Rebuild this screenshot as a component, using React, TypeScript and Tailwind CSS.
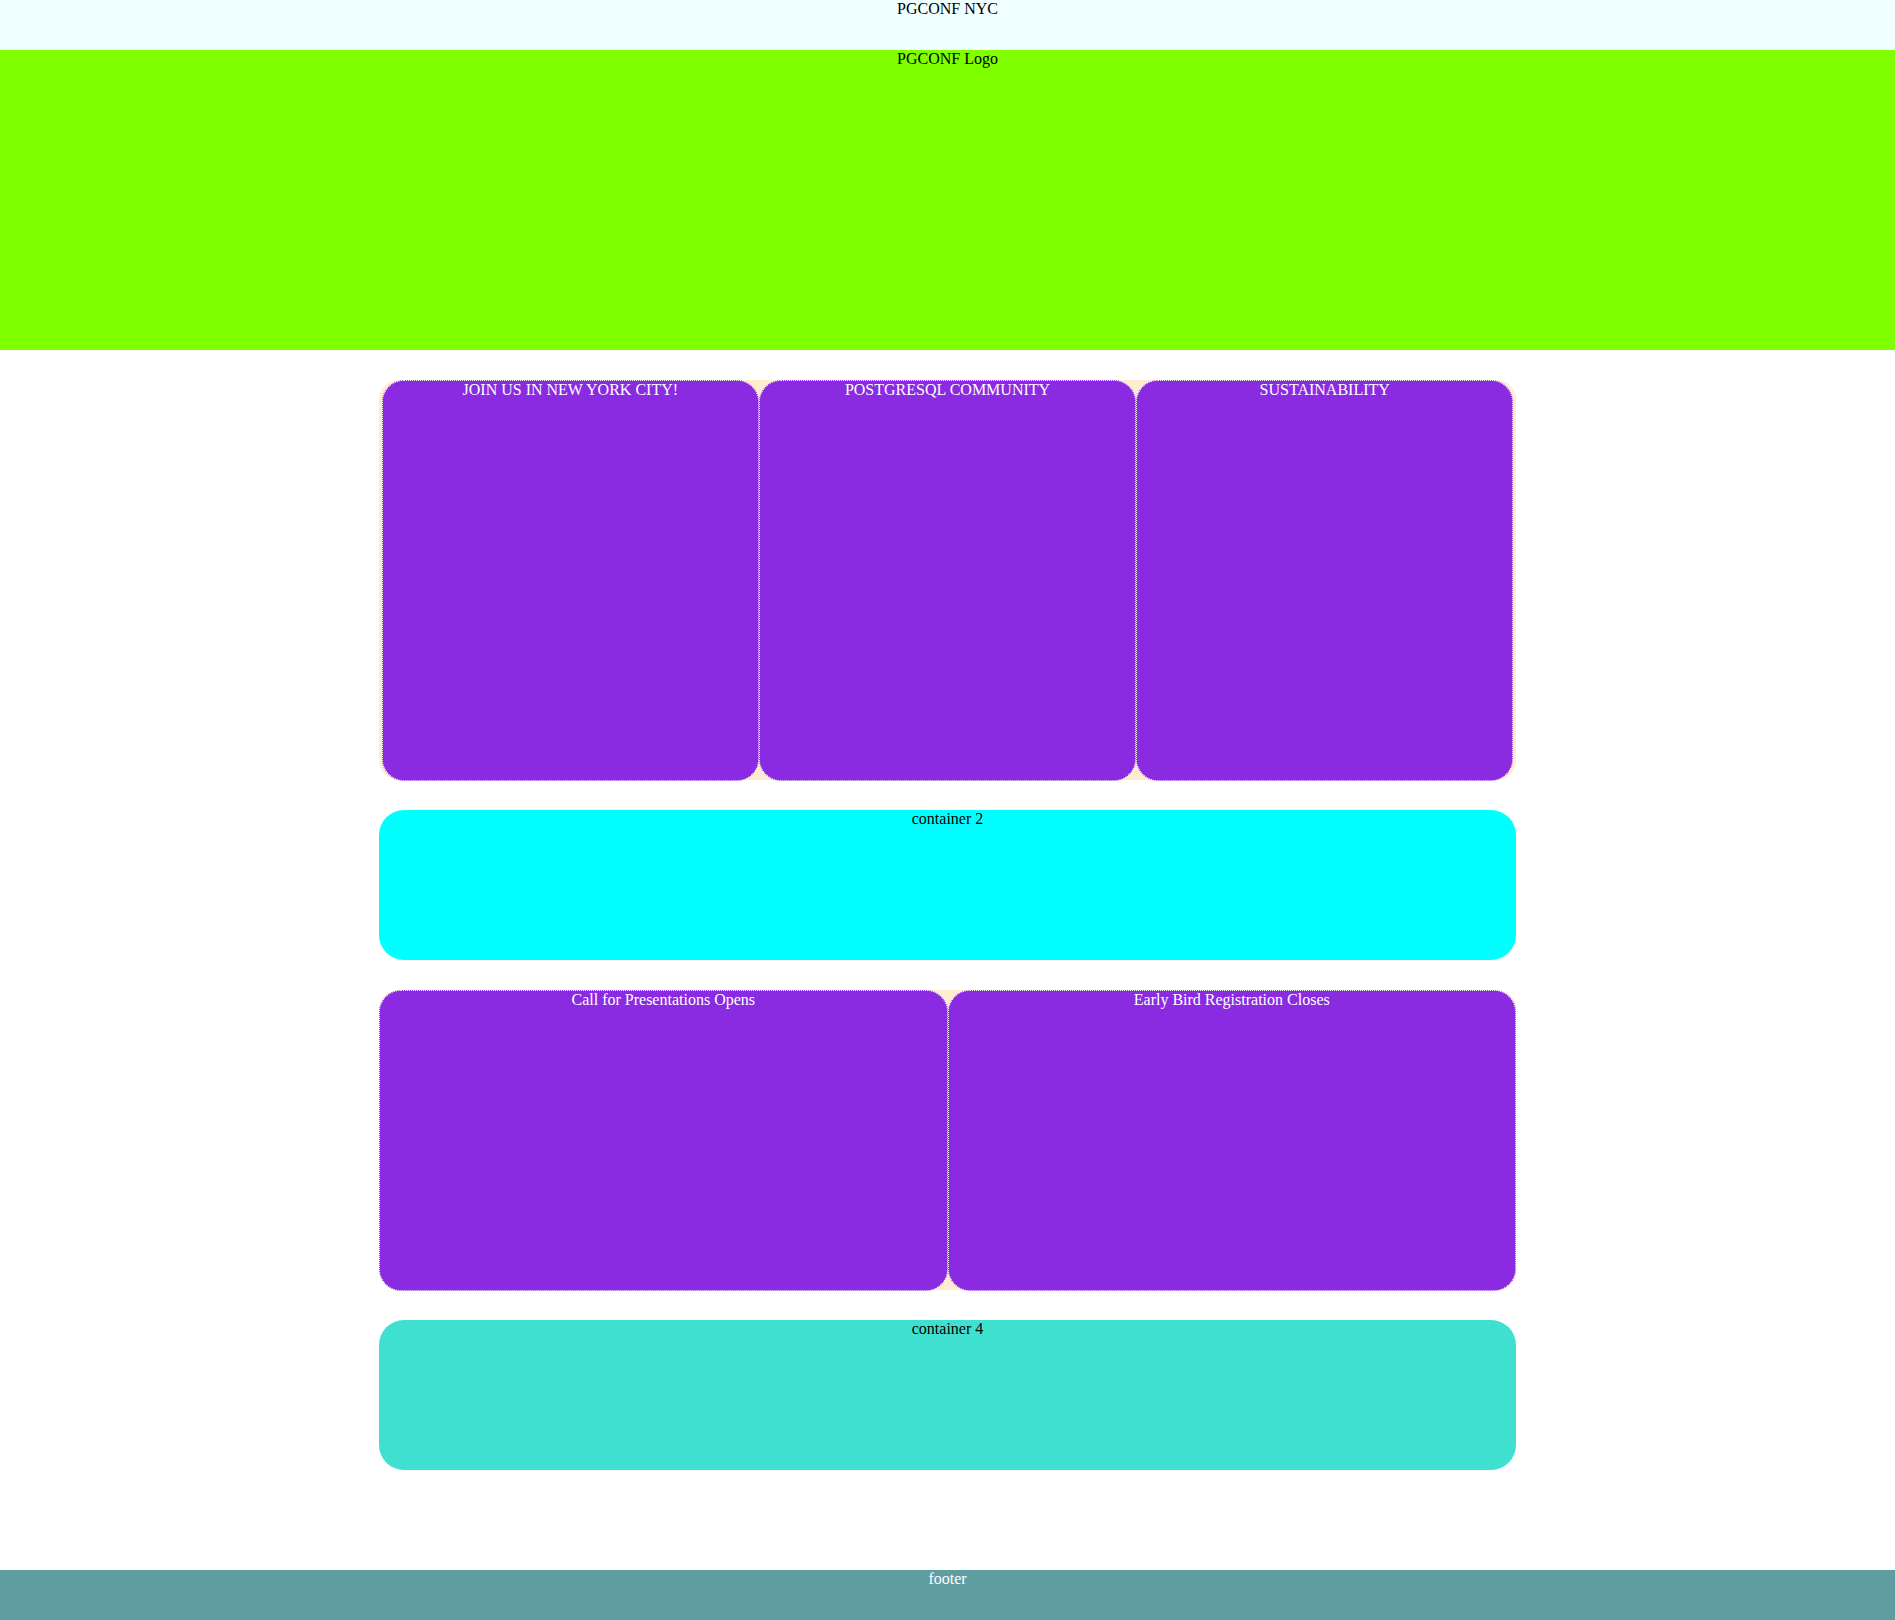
const topCards = ['JOIN US IN NEW YORK CITY!', 'POSTGRESQL COMMUNITY', 'SUSTAINABILITY'];
const dateCards = ['Call for Presentations Opens', 'Early Bird Registration Closes'];

const App = () => {
  return (
    <div className="min-h-screen bg-white font-['Liberation_Serif',serif] text-[16px] leading-[normal] text-black text-center">
      {/* Header */}
      <header className="h-[50px] bg-[#F0FFFF]">PGCONF NYC</header>

      {/* Logo band */}
      <div className="h-[300px] bg-[#7FFF00]">PGCONF Logo</div>

      <main className="mx-auto w-[60%] pt-[30px] pb-[100px] flex flex-col gap-[30px]">
        {/* container 1 */}
        <section className="h-[400px] flex justify-center rounded-[20px] bg-[#FFEBCD]">
          {topCards.map((title) => (
            <div
              key={title}
              className="w-[calc(33%+2px)] h-[401px] shrink-0 rounded-[22px] border border-dotted border-white bg-[#8A2BE2] text-white"
            >
              {title}
            </div>
          ))}
        </section>

        {/* container 2 */}
        <section className="h-[150px] rounded-[25px] bg-[#00FFFF]">container 2</section>

        {/* container 3 */}
        <section className="h-[300px] flex rounded-[20px] bg-[#FFEBCD]">
          {dateCards.map((title) => (
            <div
              key={title}
              className="w-1/2 h-[301px] shrink-0 rounded-[22px] border border-dotted border-white bg-[#8A2BE2] text-white"
            >
              {title}
            </div>
          ))}
        </section>

        {/* container 4 */}
        <section className="h-[150px] rounded-[25px] bg-[#40E0D0]">container 4</section>
      </main>

      <footer className="h-[50px] bg-[#5F9EA0] text-white">footer</footer>
    </div>
  );
};

export default App;
